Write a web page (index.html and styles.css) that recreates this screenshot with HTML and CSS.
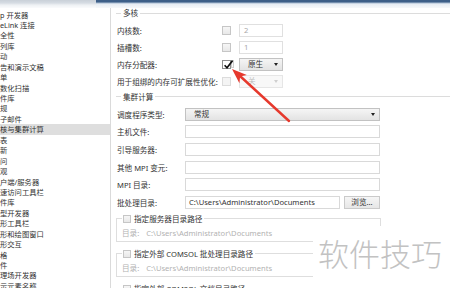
FILE: index.html
```html
<!DOCTYPE html>
<html>
<head>
<meta charset="utf-8">
<link rel="stylesheet" href="styles.css">
</head>
<body>
<div class="window">
  <div class="topbar"><div class="tb-left"></div><div class="tb-right"></div></div>
  <div class="main">
    <ul class="sidebar">
      <li>p 开发器</li>
      <li>eLink 连接</li>
      <li>全性</li>
      <li>列库</li>
      <li>动</li>
      <li>告和演示文稿</li>
      <li>单</li>
      <li>数化扫描</li>
      <li>件库</li>
      <li>规</li>
      <li>子邮件</li>
      <li class="sel">核与集群计算</li>
      <li>表</li>
      <li>新</li>
      <li>问</li>
      <li>观</li>
      <li>户端/服务器</li>
      <li>速访问工具栏</li>
      <li>件库</li>
      <li>型开发器</li>
      <li>形工具栏</li>
      <li>形和绘图窗口</li>
      <li>形交互</li>
      <li>格</li>
      <li>件</li>
      <li>理场开发器</li>
      <li>示元素名称</li>
    </ul>
    <div class="content">
      <div class="group-head"><span class="gl"></span><span class="gt">多核</span><span class="gr"></span></div>
      <div class="mc-rows">
        <div class="mc-row"><span class="lbl">内核数:</span><span class="cb"></span><span></span><span class="num">2</span></div>
        <div class="mc-row"><span class="lbl">插槽数:</span><span class="cb"></span><span></span><span class="num">1</span></div>
        <div class="mc-row"><span class="lbl">内存分配器:</span><span class="cb checked"><svg viewBox="0 0 10 10" width="10" height="10"><path d="M1.6 5.2 L4 7.8 L9.6 0.6" fill="none" stroke="#111" stroke-width="1.6"/></svg></span><span class="sep"><span class="tick"></span></span><span class="select"><span>原生</span><span class="caret"></span></span></div>
        <div class="mc-row"><span class="lbl">用于组绑的内存可扩展性优化:</span><span class="cb off"></span><span></span><span class="select dis"><span>关</span><span class="caret"></span></span></div>
      </div>
      <div class="group-head g2"><span class="gl"></span><span class="gt">集群计算</span><span class="gr"></span></div>
      <div class="cl-rows">
        <div class="cl-row"><span class="lbl">调度程序类型:</span><span class="select wide"><span>常规</span><span class="caret"></span></span></div>
        <div class="cl-row"><span class="lbl">主机文件:</span><span class="field"></span></div>
        <div class="cl-row"><span class="lbl">引导服务器:</span><span class="field"></span></div>
        <div class="cl-row"><span class="lbl">其他 MPI 变元:</span><span class="field"></span></div>
        <div class="cl-row"><span class="lbl">MPI 目录:</span><span class="field"></span></div>
        <div class="cl-row"><span class="lbl">批处理目录:</span><span class="batch"><span class="field val">C:\Users\Administrator\Documents</span><span class="btn">浏览...</span></span></div>
      </div>
      <fieldset class="sub">
        <legend><span class="cb small"></span><span>指定服务器目录路径</span></legend>
        <div class="dir-row"><span>目录:</span><span class="path">C:\Users\Administrator\Documents</span></div>
      </fieldset>
      <fieldset class="sub">
        <legend><span class="cb small"></span><span>指定外部 COMSOL 批处理目录路径</span></legend>
        <div class="dir-row"><span>目录:</span><span class="path">C:\Users\Administrator\Documents</span></div>
      </fieldset>
      <fieldset class="sub">
        <legend><span class="cb small"></span><span>指定外部 COMSOL 文档目录路径</span></legend>
        <div class="dir-row"><span>目录:</span><span class="path">C:\Users\Administrator\Documents</span></div>
      </fieldset>
    </div>
  </div>
  <div class="watermark">软件技巧</div>
  <svg class="arrow" width="450" height="288" viewBox="0 0 450 288">
    <line x1="289" y1="121" x2="240" y2="76" stroke="#e6392d" stroke-width="2.4" stroke-linecap="round"/>
    <polygon points="232,69 246.8,75 240.1,76.4 239.4,83.2" fill="#e6392d"/>
  </svg>
</div>
</body>
</html>
```

FILE: styles.css
```css
* {
  box-sizing: border-box;
  margin: 0;
  padding: 0;
}

html,
body {
  width: 450px;
  height: 288px;
  overflow: hidden;
  background: #fff;
}

body {
  font-family: "Noto Sans", "Noto Sans CJK SC", sans-serif;
  font-size: 7.6px;
  color: #333;
}

.window {
  position: relative;
  width: 450px;
  height: 288px;
  overflow: hidden;
}

.topbar {
  display: flex;
  height: 8px;
}

.tb-left {
  width: 96px;
  background: linear-gradient(to bottom, #c9d0d8 0, #d6dce3 3px, #eef1f4 5px, #fafbfc 8px);
}

.tb-right {
  flex: 1;
  background: linear-gradient(to bottom, #3d5f88 0, #3d5f88 2px, #a9bcd2 3px, #e7edf4 4px, #f6f8fa 8px);
}

.main {
  display: flex;
  height: 280px;
}

.sidebar {
  width: 111px;
  flex: none;
  list-style: none;
  border-right: 1px solid #dadada;
  padding-top: 1.5px;
  overflow: hidden;
}

.sidebar li {
  height: 10.45px;
  line-height: 10.45px;
  font-size: 7.3px;
  white-space: nowrap;
  color: #333;
}

.sidebar li.sel {
  background: #dedede;
}

.content {
  flex: 1;
  padding-left: 5px;
  overflow: hidden;
}

.group-head {
  display: flex;
  align-items: center;
  height: 10px;
}

.group-head.g2 {
  margin-top: 1.8px;
}

.gl {
  width: 5px;
  height: 1px;
  background: #dcdcdc;
}

.gt {
  padding: 0 2px;
  line-height: 10px;
  color: #333;
}

.gr {
  flex: 1;
  height: 1px;
  background: #dcdcdc;
}

.mc-rows {
  margin-top: 4.2px;
}

.mc-row {
  display: grid;
  grid-template-columns: 105px 9px 8px 44px;
  align-items: center;
  height: 17px;
  padding-left: 1px;
}

.lbl {
  white-space: nowrap;
  color: #333;
}

.cb {
  display: block;
  width: 9px;
  height: 9px;
  border: 1px solid #c6c6c6;
  background: linear-gradient(#f6f6f6, #e8e8e8);
}

.cb.off {
  border-color: #dcdcdc;
  background: #f4f4f4;
}

.cb.checked {
  border-color: #8e8e8e;
  background: #fff;
  position: relative;
  overflow: visible;
}

.cb.checked svg {
  display: block;
  margin: -1.5px 0 0 -0.5px;
}

.sep {
  display: flex;
  align-items: center;
  height: 17px;
}

.tick {
  display: block;
  width: 3px;
  height: 8px;
  margin-top: -2px;
  border: 1px solid #cfcfcf;
  background: #fafafa;
}

.num {
  display: block;
  height: 13px;
  line-height: 11px;
  border: 1px solid #e0e0e0;
  color: #a8a8a8;
  padding-left: 4px;
}

.select {
  display: flex;
  align-items: center;
  justify-content: space-between;
  height: 13px;
  padding: 0 4px 0 8px;
  border: 1px solid #c2c2c2;
  background: linear-gradient(#f5f5f5, #e3e3e3);
  color: #333;
  line-height: 11px;
}

.select.dis {
  border-color: #e6e6e6;
  background: #f8f8f8;
  color: #bcbcbc;
}

.caret {
  width: 0;
  height: 0;
  border-left: 2.5px solid transparent;
  border-right: 2.5px solid transparent;
  border-top: 3px solid #222;
}

.select.dis .caret {
  border-top-color: #cfcfcf;
}

.cl-rows {
  margin-top: 3.2px;
}

.cl-row {
  display: grid;
  grid-template-columns: 68px 195px;
  align-items: center;
  height: 17.7px;
  padding-left: 1px;
}

.field {
  display: block;
  height: 13px;
  border: 1px solid #d9d9d9;
  background: #fff;
}

.field.val {
  padding-left: 3px;
  line-height: 11px;
  color: #333;
  white-space: nowrap;
  overflow: hidden;
}

.batch {
  display: grid;
  grid-template-columns: 155px 36px;
  column-gap: 4px;
}

.btn {
  display: block;
  height: 13px;
  line-height: 11px;
  text-align: center;
  border: 1px solid #cacaca;
  background: linear-gradient(#f6f6f6, #e6e6e6);
  color: #333;
}

.sub {
  width: 265px;
  margin-top: 7px;
  border: 1px solid #dedede;
  padding: 2.5px 5px 1.5px 5px;
  min-width: 0;
}

.cl-rows + .sub {
  margin-top: 2.6px;
}

.sub legend {
  display: flex;
  align-items: center;
  gap: 3px;
  height: 10px;
  line-height: 10px;
  padding: 0 2px 0 1px;
  color: #333;
  white-space: nowrap;
}

.cb.small {
  width: 8px;
  height: 8px;
}

.dir-row {
  display: flex;
  align-items: center;
  height: 13px;
  color: #b2b2b2;
  white-space: nowrap;
}

.path {
  margin-left: 7px;
}

.watermark {
  position: absolute;
  left: 313px;
  top: 226px;
  width: 137px;
  height: 62px;
  background: #fff;
  padding: 11px 0 0 5px;
  font-family: "Noto Sans CJK SC", sans-serif;
  font-size: 31px;
  font-weight: 300;
  line-height: 31px;
  color: #c2c2c2;
  white-space: nowrap;
}

.arrow {
  position: absolute;
  left: 0;
  top: 0;
  pointer-events: none;
}
```
